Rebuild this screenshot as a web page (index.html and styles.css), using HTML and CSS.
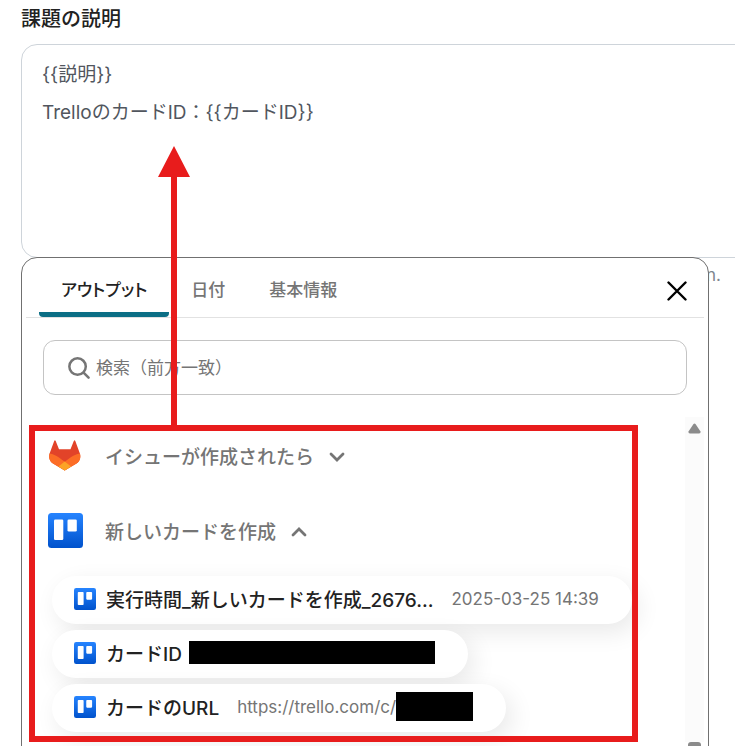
FILE: index.html
```html
<!DOCTYPE html>
<html lang="ja">
<head>
    <meta charset="UTF-8">
    <meta name="viewport" content="width=device-width, initial-scale=1.0">
    <title>課題の説明</title>
    <link rel="stylesheet" href="styles.css">
</head>
<body>
    <!-- shared icons -->
    <svg width="0" height="0" class="defs">
        <defs>
            <linearGradient id="trello-bg" x1="0" y1="0" x2="0" y2="1">
                <stop offset="0" stop-color="#2684ff"/>
                <stop offset="1" stop-color="#0052cc"/>
            </linearGradient>
            <symbol id="trello" viewBox="0 0 35 35">
                <rect width="35" height="35" rx="3.5" fill="url(#trello-bg)"/>
                <rect x="6" y="6.5" width="9.3" height="20.5" rx="1.3" fill="#fff"/>
                <rect x="19.5" y="6.5" width="9.3" height="12" rx="1.3" fill="#fff"/>
            </symbol>
        </defs>
    </svg>

    <div class="field">
        <label class="field-label" for="description">課題の説明</label>
        <textarea id="description" class="field-text">{{説明}}
TrelloのカードID：{{カードID}}</textarea>
        <p class="field-help">n.</p>

        <div class="panel">
            <div class="tabs">
                <button class="tab active">アウトプット</button>
                <button class="tab">日付</button>
                <button class="tab">基本情報</button>
                <button class="close" aria-label="閉じる">
                    <svg width="20" height="20" viewBox="0 0 20 20" fill="none" stroke="#000" stroke-width="2.4" stroke-linecap="round"><path d="M1.5 1.5l17 17M18.5 1.5l-17 17"/></svg>
                </button>
            </div>

            <div class="search">
                <svg width="22" height="22" viewBox="0 0 23 23" fill="none" stroke="#757575" stroke-width="2.6" stroke-linecap="round"><circle cx="10" cy="10" r="8.6"/><path d="M16.3 16.3l5.2 5.2"/></svg>
                <input type="text" aria-label="検索" placeholder="検索（前方一致）">
            </div>

            <div class="scroll">
                <div class="outputs">
                    <button class="group">
                        <svg class="group-icon" viewBox="0 0 35 35">
                            <path d="M6.2 3 L1.6 15.5 C.4 20 1.9 23.3 5 25.6 L16.7 32.5 L28.5 25.6 C31.7 23.2 33 20 31.9 15.5 L27.3 3 Q26.6 1.5 25.8 3 L22.5 11.2 H11 L7.7 3 Q6.9 1.5 6.2 3Z" fill="#e24329"/>
                            <path d="M32 15.4 C28.4 15.9 25.4 17.4 22.8 19.3 L16.7 23.8 L10.6 19.3 C8 17.4 5 15.9 1.5 15.4 C.3 20 1.9 23.3 5 25.6 L16.7 32.5 L28.5 25.6 C31.7 23.2 33.1 20 32 15.4Z" fill="#fc6d26"/>
                            <path d="M16.7 23.6 L10.5 28.6 L16.7 32.5 L23 28.6Z" fill="#fca326"/>
                        </svg>
                        <span>イシューが作成されたら</span>
                        <svg class="chevron" viewBox="0 0 16 10"><path d="M2 2l6 6 6-6"/></svg>
                    </button>
                    <button class="group">
                        <svg class="group-icon"><use href="#trello"/></svg>
                        <span>新しいカードを作成</span>
                        <svg class="chevron" viewBox="0 0 16 10"><path d="M2 8l6-6 6 6"/></svg>
                    </button>

                    <div class="items">
                        <button class="item">
                            <svg class="item-icon"><use href="#trello"/></svg>
                            <span class="name">実行時間_新しいカードを作成_2676...</span>
                            <span class="value">2025-03-25 14:39</span>
                        </button>
                        <button class="item">
                            <svg class="item-icon"><use href="#trello"/></svg>
                            <span class="name">カードID</span>
                            <span class="mask mask-id"></span>
                        </button>
                        <button class="item">
                            <svg class="item-icon"><use href="#trello"/></svg>
                            <span class="name">カードのURL</span>
                            <span class="value">https://trello.com/c/</span>
                            <span class="mask mask-url"></span>
                        </button>
                    </div>

                    <!-- red frame and arrow -->
                    <div class="highlight">
                        <svg class="arrow" width="32" height="285" viewBox="0 0 32 285" fill="#e81c1c"><path d="M16 0L32 31H19V285H13V31H0Z"/></svg>
                    </div>
                </div>

                <div class="scrollbar">
                    <svg width="13" height="11" viewBox="0 0 13 11" fill="#8b8b8b"><path d="M5.5 1Q6.5 0 7.5 1L12.5 8.5Q13 10.5 11 10.5H2Q0 10.5 .5 8.5Z"/></svg>
                    <span class="thumb"></span>
                </div>
            </div>
        </div>
    </div>
</body>
</html>
```
FILE: styles.css
```css
* {
    box-sizing: border-box;
}
body {
    margin: 0;
    height: 100vh;
    overflow: hidden;
    background: #fff;
    font-family: Inter, "Noto Sans CJK JP", sans-serif;
    font-size: 19px;
    color: #222;
}
button {
    padding: 0;
    border: none;
    background: none;
    font: inherit;
    color: inherit;
    cursor: pointer;
}
.defs {
    position: absolute;
}
.field {
    position: relative;
    height: 100%;
    overflow: hidden;
    padding-left: 21px;
}
.field-label {
    display: block;
    height: 44px;
    line-height: 38px;
    font-size: 20px;
    font-weight: 500;
}
.field-text {
    display: block;
    width: calc(100% + 30px);
    height: 214px;
    padding: 11px 20px;
    border: 1px solid #ced4da;
    border-radius: 16px;
    resize: none;
    outline: none;
    overflow: hidden;
    font: inherit;
    line-height: 38px;
    color: #51565e;
}
.field-help {
    margin: 0;
    padding-right: 14px;
    text-align: right;
    font-size: 17px;
    line-height: 34px;
    color: #7d858d;
}

/* output picker */
.panel {
    position: absolute;
    top: 257px;
    left: 21px;
    right: 26px;
    padding: 0 4px 24px;
    border: 1px solid #707070;
    border-radius: 16px;
    background: #fff;
}
.tabs {
    display: flex;
    height: 60px;
    padding: 0 17px 0 13px;
    border-bottom: 1px solid #e2e2e2;
}
.tab {
    padding: 2px 22px 0;
    font-size: 17px;
    font-weight: 500;
    font-feature-settings: "palt";
    color: #757575;
}
.tab.active {
    color: #222;
    background: linear-gradient(#0b6e85, #0b6e85) bottom / 100% 5px no-repeat;
    border-radius: 4px;
}
.close {
    display: flex;
    align-items: center;
    margin-left: auto;
    padding-top: 6px;
}
.search {
    display: flex;
    align-items: center;
    gap: 6px;
    height: 55px;
    margin: 22px 17px;
    padding: 0 24px;
    border: 1px solid #c4c4c4;
    border-radius: 12px;
}
.search input {
    flex: 1;
    padding: 0;
    border: none;
    outline: none;
    font: inherit;
    font-size: 17px;
}
.search input::placeholder {
    color: #757575;
}
.scroll {
    display: flex;
    justify-content: space-between;
}
.outputs {
    position: relative;
    width: 609px;
    margin: 8px 0 0 3px;
    padding: 13px 0 10px 19px;
}
.group {
    display: flex;
    align-items: center;
    height: 35px;
    margin-bottom: 40px;
    font-weight: 500;
    color: #757575;
}
.group-icon {
    width: 35px;
    height: 35px;
    margin-right: 22px;
}
.chevron {
    width: 16px;
    height: 10px;
    margin: 2px 0 0 15px;
    fill: none;
    stroke: #757575;
    stroke-width: 2.8;
    stroke-linecap: round;
}
.items {
    display: flex;
    flex-direction: column;
    align-items: flex-start;
    gap: 6px;
    margin: -12px 0 0 4px;
}
.item {
    display: flex;
    align-items: center;
    height: 48px;
    padding: 0 33px 3px 22px;
    border-radius: 24px;
    background: #fff;
    box-shadow: 6px 8px 24px rgba(0, 0, 0, 0.09);
    white-space: nowrap;
}
.item-icon {
    width: 22px;
    height: 22px;
    margin-right: 10px;
}
.name {
    font-weight: 500;
}
.value {
    margin-left: 18px;
    font-size: 17px;
    color: #757575;
}
.mask {
    background: #000;
}
.mask-id {
    width: 246px;
    height: 23px;
    margin-left: 7px;
}
.mask-url {
    width: 77px;
    height: 29px;
}
.highlight {
    position: absolute;
    inset: 0;
    border: 6px solid #e81c1c;
    pointer-events: none;
}
.arrow {
    position: absolute;
    left: 123px;
    bottom: 100%;
}
.scrollbar {
    display: flex;
    flex-direction: column;
    align-items: center;
    justify-content: space-between;
    width: 19px;
    padding-top: 6px;
    background: #fbfbfb;
}
.thumb {
    width: 13px;
    height: 120px;
    margin-bottom: -120px;
    border-radius: 3px;
    background: #8b8b8b;
}
```
